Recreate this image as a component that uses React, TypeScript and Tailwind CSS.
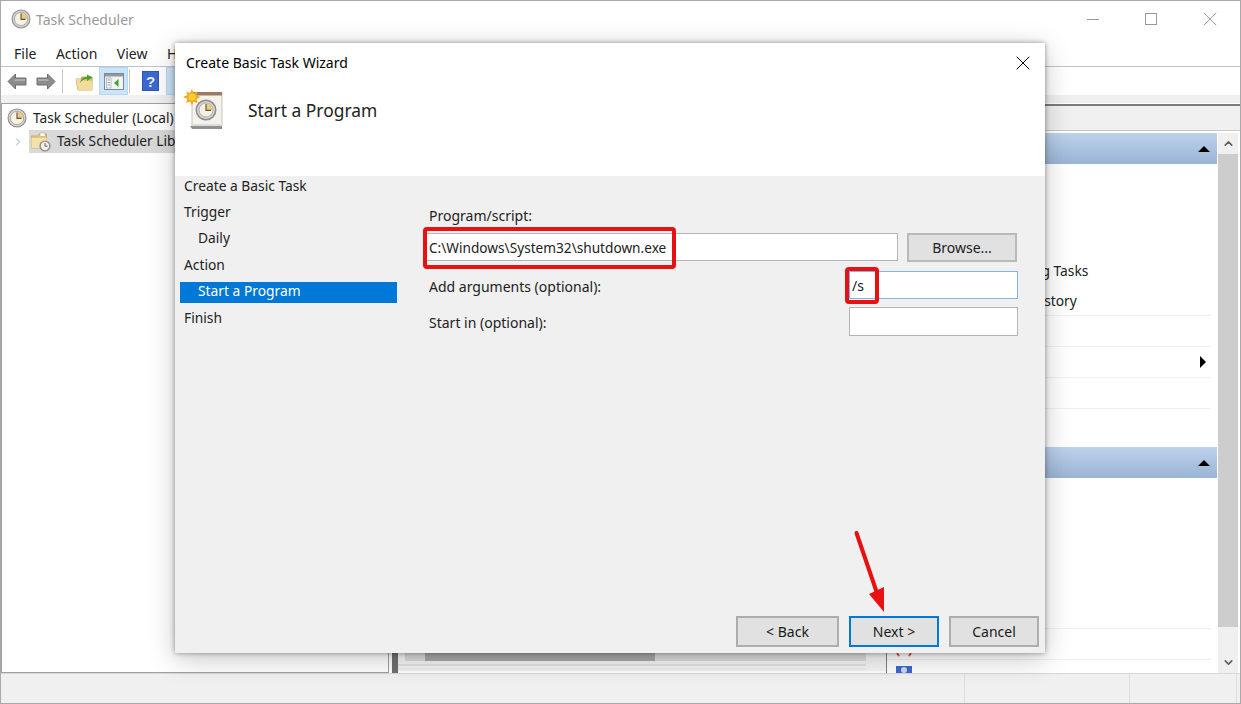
import { ChevronDown, ChevronRight, ChevronUp, X } from "lucide-react";

const font = "font-['Noto_Sans',sans-serif]";

const ClockIcon = ({ size = 20 }: { size?: number }) => (
  <svg width={size} height={size} viewBox="0 0 20 20" className="shrink-0">
    <circle cx="10" cy="10" r="9.5" fill="#8f8f8f" />
    <circle cx="10" cy="10" r="8.4" fill="#d4d4d4" />
    <circle cx="10" cy="10" r="6.6" fill="#f7f1df" stroke="#9a9a9a" strokeWidth="0.8" />
    <path d="M10 10V3.8A6.2 6.2 0 0 1 16.2 10Z" fill="#eccb78" />
    <path d="M10 4.5V10.4H14.5" fill="none" stroke="#555" strokeWidth="1.1" />
  </svg>
);

const NavArrow = ({ flip = false }: { flip?: boolean }) => (
  <svg width="20" height="17" viewBox="0 0 20 17" className={flip ? "-scale-x-100" : ""}>
    <path d="M1 8.5 8.5 1V5H19V12H8.5V16Z" fill="#8d8d8d" stroke="#6e6e6e" strokeWidth="1" />
    <path d="M8.5 6H18V8H7Z" fill="#adadad" />
  </svg>
);

const FolderUp = () => (
  <svg width="19" height="19" viewBox="0 0 19 19">
    <path d="M1 7H6L7 5H17V18H3Z" fill="#e8c877" stroke="#b4934a" strokeWidth="0.8" />
    <path d="M1 7H6L8 9H17V18H3Z" fill="#f3dc9b" />
    <path d="M5 11C6 6 9 5 12 5V2.5L17.5 5.5 12 9V7C9 7 7 8 5 11Z" fill="#4aa02c" />
  </svg>
);

const PaneIcon = () => (
  <svg width="20" height="17" viewBox="0 0 20 17">
    <rect x="0.5" y="0.5" width="19" height="16" fill="#f3f3f3" stroke="#7d8a96" />
    <rect x="1" y="1" width="18" height="2.5" fill="#8d9aa6" />
    <rect x="2.5" y="5" width="4.5" height="10" fill="#fff" stroke="#9aa5af" strokeWidth="0.7" />
    <path d="M3.5 7H6M3.5 9.5H6M3.5 12H6" stroke="#6d7d8c" strokeWidth="0.8" />
    <path d="M14.5 6V14L10 10Z" fill="#3ca52f" />
  </svg>
);

const HelpIcon = () => (
  <svg width="17" height="20" viewBox="0 0 17 20">
    <rect width="17" height="20" fill="#2f56b0" />
    <rect x="1" y="1" width="15" height="18" fill="#3a6ad0" />
    <text x="8.5" y="15.5" textAnchor="middle" fontSize="15" fontWeight="700" fill="#e9eef8" fontFamily="Liberation Sans">
      ?
    </text>
  </svg>
);

const LibraryIcon = () => (
  <svg width="21" height="20" viewBox="0 0 21 20" className="shrink-0">
    <path d="M0.5 4H7L8.5 2H15.5V16H0.5Z" fill="#e8c877" stroke="#c5a454" strokeWidth="0.7" />
    <path d="M0.5 6H15.5V16H0.5Z" fill="#f5e2a8" />
    <rect x="9" y="1" width="5" height="3.5" fill="#fff" stroke="#b9a678" strokeWidth="0.6" />
    <circle cx="14" cy="14" r="5.6" fill="#8d8d8d" />
    <circle cx="14" cy="14" r="4.2" fill="#f3f0e6" />
    <path d="M14 11V14.2H16.6" fill="none" stroke="#555" strokeWidth="0.9" />
  </svg>
);

const WizardIcon = () => (
  <svg width="40" height="40" viewBox="0 0 40 40" className="shrink-0">
    <rect x="9" y="4" width="30" height="33" fill="#f5f2ec" stroke="#c9c5bd" />
    <rect x="9" y="3" width="30" height="3.5" fill="#9c7a62" />
    <path d="M7 37H39V40H9Z" fill="#8f8f8f" />
    <path d="M10 35H39V37H8Z" fill="#dcdcdc" />
    <circle cx="23" cy="21" r="10.5" fill="#8c8c8c" />
    <circle cx="23" cy="21" r="9" fill="#d6d6d6" />
    <circle cx="23" cy="21" r="7" fill="#f6f0de" stroke="#9a9a9a" strokeWidth="0.8" />
    <path d="M23 21V14.5A6.5 6.5 0 0 1 29.5 21Z" fill="#eccb78" />
    <path d="M23 15V21.4H28" fill="none" stroke="#555" strokeWidth="1.1" />
    <path
      d="M9 0 10.5 4 14.5 2.5 13.5 6.5 17.5 8 13.5 10 14.5 14 10.5 12.5 9 16.5 7 12.5 3 14 4.500 10 0 8 4.500 6 3 2.500 7 4Z"
      fill="#f5a81c"
    />
    <circle cx="9" cy="8" r="3.500" fill="#ffd23c" />
  </svg>
);

const SectionBar = () => (
  <div className="flex h-[31px] items-center justify-end bg-gradient-to-b from-[#bdd3ec] to-[#9ab4d4] pr-[7px]">
    <div className="h-0 w-0 border-x-[6px] border-b-[6px] border-x-transparent border-b-black" />
  </div>
);

const Row = ({ label, arrow }: { label?: string; arrow?: boolean }) => (
  <div className="mr-[6px] flex h-[31px] shrink-0 items-center justify-between border-b border-[#f0f0f0] pl-[38px] pr-[5px] text-[13.8px] text-[#222]">
    <span>{label}</span>
    {arrow && <div className="h-0 w-0 border-y-[6px] border-l-[6px] border-y-transparent border-l-black" />}
  </div>
);

const WizardButton = ({ label, width, active }: { label: string; width: string; active?: boolean }) => (
  <button
    className={`h-[31px] ${width} border-2 bg-[#e1e1e1] text-[14px] text-[#1a1a1a] ${
      active ? "border-[#0078d7]" : "border-[#adadad]"
    }`}
  >
    {label}
  </button>
);

const navItems = [
  { label: "Create a Basic Task" },
  { label: "Trigger" },
  { label: "Daily", sub: true },
  { label: "Action" },
  { label: "Start a Program", sub: true, active: true },
  { label: "Finish" },
];

const Wizard = () => (
  <div className="absolute left-[174px] top-[42px] flex h-[610px] w-[870px] flex-col bg-[#f0f0f0] shadow-[0_0_5px_rgba(0,0,0,0.4),0_6px_26px_rgba(0,0,0,0.22)]">
    <div className="h-[133px] shrink-0 bg-white">
      <div className="flex h-[40px] items-center justify-between pl-[11px] pr-[10px] text-[14px] text-black">
        <span className="pb-[2px]">Create Basic Task Wizard</span>
        <X size={24} strokeWidth={1} className="text-black" />
      </div>
      <div className="flex items-start pl-[8px] pt-[6px]">
        <WizardIcon />
        <span className="ml-[25px] mt-[9px] text-[17.4px] leading-[24px] text-[#222]">Start a Program</span>
      </div>
    </div>

    <div className="flex flex-1">
      <div className="ml-[5px] flex w-[217px] flex-col gap-[5.4px] text-[13.8px]">
        {navItems.map((item) => (
          <div
            key={item.label}
            className={`flex h-[21px] items-center pb-px ${item.sub ? "pl-[18px]" : "pl-[4px]"} ${
              item.active ? "bg-[#0078d7] text-white" : "text-[#222]"
            }`}
          >
            {item.label}
          </div>
        ))}
      </div>

      <div className="flex w-[621px] flex-col pl-[27px] pt-[30px] text-[14px] text-[#222]">
        <div className="h-[20px] pl-[5px] leading-[20px]">Program/script:</div>
        <div className="mt-[7px] flex gap-[9px]">
          <input
            readOnly
            value="C:\Windows\System32\shutdown.exe"
            className="h-[28px] w-[474px] border border-[#b4b4b4] bg-white pl-[4px] text-[13.65px] text-[#222] outline-none"
          />
          <button className="h-[29px] w-[110px] border-2 border-[#b9b9b9] bg-[#e1e1e1]">Browse...</button>
        </div>
        <div className="mt-[9px] flex items-center justify-between">
          <span className="pl-[5px] pt-[2px]">Add arguments (optional):</span>
          <input
            readOnly
            value="/s"
            className="h-[28px] w-[169px] border border-[#7eb4ea] bg-white pl-[2px] text-[#222] outline-none"
          />
        </div>
        <div className="mt-[8px] flex items-center justify-between">
          <span className="pl-[5px] pt-[2px]">Start in (optional):</span>
          <input readOnly value="" className="h-[29px] w-[169px] border border-[#b4b4b4] bg-white outline-none" />
        </div>
      </div>
    </div>

    <div className="flex shrink-0 justify-end gap-[10px] pb-[6px] pr-[6px]">
      <WizardButton label="< Back" width="w-[103px]" />
      <WizardButton label="Next >" width="w-[90px]" active />
      <WizardButton label="Cancel" width="w-[90px]" />
    </div>
  </div>
);

const App = () => {
  return (
    <div className={`relative flex h-[704px] w-[1241px] flex-col overflow-hidden border border-[#a9a9a9] bg-white ${font}`}>
      {/* title bar */}
      <div className="flex h-[38px] shrink-0 items-center pb-[2px] pl-[10px] text-[14px] text-[#999]">
        <ClockIcon />
        <span className="ml-[5px]">Task Scheduler</span>
        <div className="ml-auto flex items-center pr-[18px]">
          <div className="mr-[46px] h-px w-[12px] bg-[#9a9a9a]" />
          <div className="mr-[41px] h-[12px] w-[12px] border border-[#9a9a9a]" />
          <X size={24} strokeWidth={0.8} className="text-[#8a8a8a]" />
        </div>
      </div>

      {/* menu */}
      <div className="flex h-[28px] shrink-0 items-center gap-[19.5px] border-b border-[#bfc3cc] pl-[13px] pt-px text-[14px] text-[#222]">
        <span>File</span>
        <span>Action</span>
        <span>View</span>
        <span>Help</span>
      </div>

      {/* toolbar */}
      <div className="flex h-[28px] shrink-0 items-center pl-[6px]">
        <NavArrow />
        <div className="ml-[9px]">
          <NavArrow flip />
        </div>
        <div className="ml-[6px] h-[24px] w-px bg-[#c4c4c4]" />
        <div className="ml-[12px]">
          <FolderUp />
        </div>
        <div className="ml-[5px] flex h-[28px] w-[29px] items-center justify-center border border-[#b4d8f5] bg-[#cce4f7]">
          <PaneIcon />
        </div>
        <div className="ml-[1px] h-[24px] w-px bg-[#c4c4c4]" />
        <div className="ml-[12px]">
          <HelpIcon />
        </div>
        <div className="ml-[7px] h-[28px] w-[29px] border border-[#b4d8f5] bg-[#cce4f7]" />
      </div>

      <div className="h-[8px] shrink-0 bg-[#f0f0f0]" />

      {/* panes */}
      <div className="flex h-[570px] shrink-0">
        <div className="w-[388px] shrink-0 border border-[#a0a0a0] pt-[3px] text-[13.7px] text-[#222]">
          <div className="flex h-[22px] items-center gap-[6px] pl-[5px] whitespace-nowrap">
            <ClockIcon />
            <span>Task Scheduler (Local)</span>
          </div>
          <div className="mt-px flex h-[23px] items-center pl-[10px]">
            <ChevronRight size={12} strokeWidth={1.5} className="shrink-0 text-[#8a8a8a]" />
            <div className="ml-[5px] flex h-[23px] flex-1 items-center gap-[5px] bg-[#d9d9d9] pl-[2px]">
              <LibraryIcon />
              <span>Task Scheduler Library</span>
            </div>
          </div>
        </div>

        <div className="flex w-[497px] shrink-0 flex-col justify-end">
          <div className="flex h-[22px]">
            <div className="ml-[3px] w-[6px] bg-[#707070]" />
            <div className="flex-1 border-b-2 border-white bg-[#f6f6f6] pr-[20px]">
              <div className="ml-[7px] flex h-[10px] bg-[#dcdcdc] pl-[20px]">
                <div className="w-[230px] bg-[#a8a8a8]" />
              </div>
              <div className="mt-[3px] h-[2px] bg-[#e4e4e4]" />
              <div className="mt-[2px] h-[2px] bg-[#ececec]" />
            </div>
          </div>
        </div>

        <div className="flex flex-1 flex-col border-l border-[#808080] pt-px">
          <div className="h-[2px] shrink-0 bg-[#7c7c7c]" />
          <div className="h-[25px] shrink-0 border-b border-[#c8c8c8] bg-[#f0f0f0]" />
          <div className="mt-[2px] flex min-h-0 flex-1">
            <div className="w-[330px] shrink-0 overflow-hidden">
              <SectionBar />
              <div className="flex flex-col pt-[90px]">
                <div className="flex h-[31px] shrink-0 items-center pl-[38px] pt-[3px] text-[13.8px] text-[#222]">Display All Running Tasks</div>
                <div className="mr-[6px] flex h-[31px] shrink-0 items-center border-b border-[#f0f0f0] pl-[38px] pt-[2px] text-[13.8px] text-[#222]">
                  Enable All Tasks History
                </div>
                <Row />
                <Row arrow />
                <Row />
                <div className="h-[38px] shrink-0" />
              </div>
              <SectionBar />
              <div className="flex flex-col pt-[120px]">
                <div className="mr-[6px] flex h-[31px] shrink-0 border-b border-[#f0f0f0]" />
                <div className="relative mr-[6px] flex h-[31px] shrink-0 border-b border-[#f0f0f0]">
                  <svg width="16" height="4" viewBox="0 0 16 4" className="absolute left-[9px] top-[24px]">
                    <path d="M1 0 3 3M15 0 13 3" stroke="#d9534f" strokeWidth="2" />
                  </svg>
                </div>
                <div className="flex h-[20px] shrink-0 items-start pl-[9px] pt-[6px] text-[14px] leading-[20px] text-[#222]">
                  <div className="flex h-[16px] w-[16px] shrink-0 justify-center bg-[#3f68cc] pt-px">
                    <div className="h-[6px] w-[6px] rounded-full bg-[#cfd8ee]" />
                  </div>
                  <span className="ml-[14px] mt-[3px]">Help</span>
                </div>
              </div>
            </div>
            <div className="ml-px flex w-[20px] shrink-0 flex-col bg-[#f0f0f0]">
              <div className="flex h-[21px] shrink-0 items-center justify-center">
                <ChevronUp size={13} strokeWidth={3} className="text-[#606060]" />
              </div>
              <div className="h-[473px] shrink-0 bg-[#cdcdcd]" />
              <div className="mt-auto flex h-[21px] shrink-0 items-center justify-center">
                <ChevronDown size={13} strokeWidth={3} className="text-[#606060]" />
              </div>
            </div>
          </div>
        </div>
      </div>

      {/* status bar */}
      <div className="flex flex-1 border-t border-[#d8d8d8] bg-[#f0f0f0]">
        <div className="w-[964px] border-r border-[#dfdfdf]" />
        <div className="w-[165px] border-r border-[#dfdfdf]" />
        <div className="w-[107px] border-r border-[#dfdfdf]" />
      </div>

      <Wizard />

      {/* red markup on top of the screenshot */}
      <div className="absolute left-[422px] top-[226px] h-[42px] w-[253px] rounded-[4px] border-[4px] border-[#e81010]" />
      <div className="absolute left-[844px] top-[266px] h-[37px] w-[34px] rounded-[4px] border-[4px] border-[#e81010]" />
      <svg className="absolute left-[850px] top-[528px]" width="40" height="86" viewBox="0 0 40 86">
        <path d="M5.500 4 27 67" stroke="#e81010" strokeWidth="4" strokeLinecap="round" />
        <path d="M33 83 18 65 33 58Z" fill="#e81010" />
      </svg>
    </div>
  );
};

export default App;
